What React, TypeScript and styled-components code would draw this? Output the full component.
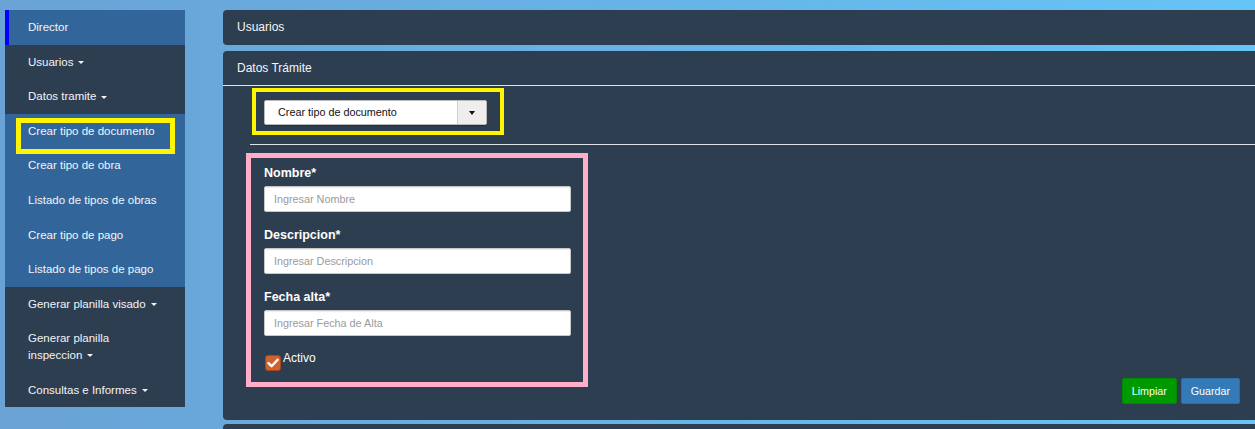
import React from "react";
import styled, { createGlobalStyle } from "styled-components";

const GlobalStyle = createGlobalStyle`
  html, body {
    margin: 0;
    padding: 0;
    height: 429px;
    overflow: hidden;
  }
  body {
    background: linear-gradient(to right, #6aa2d5 0%, #67b3e6 50%, #66c4f6 100%);
    font-family: "Liberation Sans", Arial, sans-serif;
  }
  * { box-sizing: border-box; }
`;

const Page = styled.div`
  display: flex;
  align-items: flex-start;
  gap: 38px;
  padding: 10px 0 0 5px;
  height: 429px;
  overflow: hidden;
`;

const Sidebar = styled.nav`
  width: 180px;
  flex: none;
  display: flex;
  flex-direction: column;
`;

const NavItem = styled.div<{ $tone: "blue" | "dark"; $active?: boolean }>`
  position: relative;
  background: ${(p) => (p.$tone === "blue" ? "#32669b" : "#2d3e50")};
  border-left: ${(p) => (p.$active ? "4px solid #0000ff" : "none")};
  padding: 9px 10px 9px ${(p) => (p.$active ? "19px" : "23px")};
  line-height: 16.6px;
  font-size: 11.5px;
  color: #f2f4f7;
`;

const Caret = styled.span`
  display: inline-block;
  width: 0;
  height: 0;
  margin-left: 5px;
  vertical-align: middle;
  border-top: 3px solid #f2f4f7;
  border-left: 3px solid transparent;
  border-right: 3px solid transparent;
`;

const Highlight = styled.span`
  position: absolute;
  z-index: 2;
  left: 11px;
  top: 4px;
  width: 159px;
  height: 36px;
  border: 5px solid #fff500;
  pointer-events: none;
`;

const Main = styled.main`
  flex: 1;
  margin-right: -10px;
  display: flex;
  flex-direction: column;
`;

const Panel = styled.section<{ $top?: number }>`
  background: #2d3e50;
  border-radius: 4px;
  margin-top: ${(p) => p.$top ?? 0}px;
`;

const PanelHeading = styled.div<{ $ruled?: boolean }>`
  height: 35px;
  line-height: 35px;
  padding-left: 14px;
  font-size: 12px;
  color: #f4f6f8;
  border-bottom: ${(p) => (p.$ruled ? "1px solid #dfe3e8" : "none")};
`;

const SelectFrame = styled.div`
  margin: 2px 0 0 29px;
  width: 252px;
  height: 47px;
  border: 4px solid #fff500;
  padding: 8px 0 0 8px;
`;

const Select = styled.div`
  width: 223px;
  height: 25px;
  display: flex;
  background: #fff;
  border: 1px solid #b9b9b9;
  border-radius: 2px;
  box-shadow: 0 1px 1px rgba(0, 0, 0, 0.25);
  overflow: hidden;
`;

const SelectText = styled.div`
  flex: 1;
  padding-left: 13px;
  line-height: 23px;
  font-size: 10.8px;
  color: #111;
`;

const SelectButton = styled.div`
  width: 29px;
  background: #efeeec;
  border-left: 1px solid #cfcfcf;
  display: flex;
  align-items: center;
  justify-content: center;
`;

const DarkCaret = styled.span`
  width: 0;
  height: 0;
  border-top: 4px solid #111;
  border-left: 3.5px solid transparent;
  border-right: 3.5px solid transparent;
`;

const Rule = styled.hr`
  margin: 9px 0 0 27px;
  border: none;
  height: 1px;
  background: #dfe3e8;
`;

const ContentRow = styled.div`
  display: flex;
  margin-top: 8px;
  padding: 0 25px 16px 23px;
`;

const FormBox = styled.div`
  width: 342px;
  align-self: flex-start;
  margin-bottom: 17px;
  border: 5px solid #ffadc8;
  padding: 5px 12px 11px 13px;
`;

const Group = styled.div<{ $last?: boolean }>`
  margin-bottom: ${(p) => (p.$last ? "19px" : "13px")};
`;

const Label = styled.label`
  display: block;
  height: 20px;
  line-height: 20px;
  margin-bottom: 3px;
  font-size: 12.5px;
  font-weight: bold;
  color: #ffffff;
`;

const Input = styled.input`
  display: block;
  width: 100%;
  height: 26px;
  padding: 0 9px;
  border: 1px solid #c8c8c8;
  border-radius: 2px;
  background: #fff;
  font-family: "Liberation Sans", Arial, sans-serif;
  font-size: 10.8px;
  color: #333;
  box-shadow: inset 0 1px 1px rgba(0, 0, 0, 0.08);
  &::placeholder {
    color: #9a9a9a;
  }
`;

const CheckRow = styled.div`
  display: flex;
  align-items: flex-start;
  height: 16px;
  padding-left: 1px;
`;

const CheckBox = styled.span`
  width: 16px;
  height: 16px;
  border-radius: 3px;
  background: #d0622d;
  border: 1px solid #a9471c;
  display: flex;
  align-items: center;
  justify-content: center;
`;

const CheckLabel = styled.span`
  margin-left: 2px;
  margin-top: -4px;
  font-size: 12px;
  line-height: 14px;
  color: #ffffff;
`;

const Actions = styled.div`
  margin-left: auto;
  align-self: flex-end;
  display: flex;
  gap: 4px;
`;

const Button = styled.button<{ $variant: "green" | "blue" }>`
  height: 26px;
  padding: 0 9px;
  border-radius: 2px;
  border: 1px solid ${(p) => (p.$variant === "green" ? "#008a00" : "#2e6da4")};
  background: ${(p) => (p.$variant === "green" ? "#009a00" : "#337ab7")};
  color: #fff;
  font-family: "Liberation Sans", Arial, sans-serif;
  font-size: 10.7px;
`;

const FillPanel = styled(Panel)`
  height: 40px;
`;

type Item = { label: React.ReactNode; tone: "blue" | "dark"; caret?: boolean; active?: boolean; mark?: boolean };

const items: Item[] = [
  { label: "Director", tone: "blue", active: true },
  { label: "Usuarios", tone: "dark", caret: true },
  { label: "Datos tramite", tone: "dark", caret: true },
  { label: "Crear tipo de documento", tone: "blue", mark: true },
  { label: "Crear tipo de obra", tone: "blue" },
  { label: "Listado de tipos de obras", tone: "blue" },
  { label: "Crear tipo de pago", tone: "blue" },
  { label: "Listado de tipos de pago", tone: "blue" },
  { label: "Generar planilla visado", tone: "dark", caret: true },
  { label: <>Generar planilla<br />inspeccion</>, tone: "dark", caret: true },
  { label: "Consultas e Informes", tone: "dark", caret: true },
];

export default function App() {
  return (
    <>
      <GlobalStyle />
      <Page>
        <Sidebar>
          {items.map((it, i) => (
            <NavItem key={i} $tone={it.tone} $active={it.active}>
              {it.label}
              {it.caret && <Caret />}
              {it.mark && <Highlight />}
            </NavItem>
          ))}
        </Sidebar>
        <Main>
          <Panel>
            <PanelHeading>Usuarios</PanelHeading>
          </Panel>
          <Panel $top={6}>
            <PanelHeading $ruled>Datos Trámite</PanelHeading>
            <SelectFrame>
              <Select>
                <SelectText>Crear tipo de documento</SelectText>
                <SelectButton>
                  <DarkCaret />
                </SelectButton>
              </Select>
            </SelectFrame>
            <Rule />
            <ContentRow>
              <FormBox>
                <Group>
                  <Label>Nombre*</Label>
                  <Input placeholder="Ingresar Nombre" />
                </Group>
                <Group>
                  <Label>Descripcion*</Label>
                  <Input placeholder="Ingresar Descripcion" />
                </Group>
                <Group $last>
                  <Label>Fecha alta*</Label>
                  <Input placeholder="Ingresar Fecha de Alta" />
                </Group>
                <CheckRow>
                  <CheckBox>
                    <svg width="12" height="10" viewBox="0 0 12 10">
                      <path d="M1.5 5.2 L4.6 8.2 L10.6 1.8" fill="none" stroke="#fff" strokeWidth="2.4" strokeLinecap="round" strokeLinejoin="round" />
                    </svg>
                  </CheckBox>
                  <CheckLabel>Activo</CheckLabel>
                </CheckRow>
              </FormBox>
              <Actions>
                <Button $variant="green">Limpiar</Button>
                <Button $variant="blue">Guardar</Button>
              </Actions>
            </ContentRow>
          </Panel>
          <FillPanel $top={4} />
        </Main>
      </Page>
    </>
  );
}
